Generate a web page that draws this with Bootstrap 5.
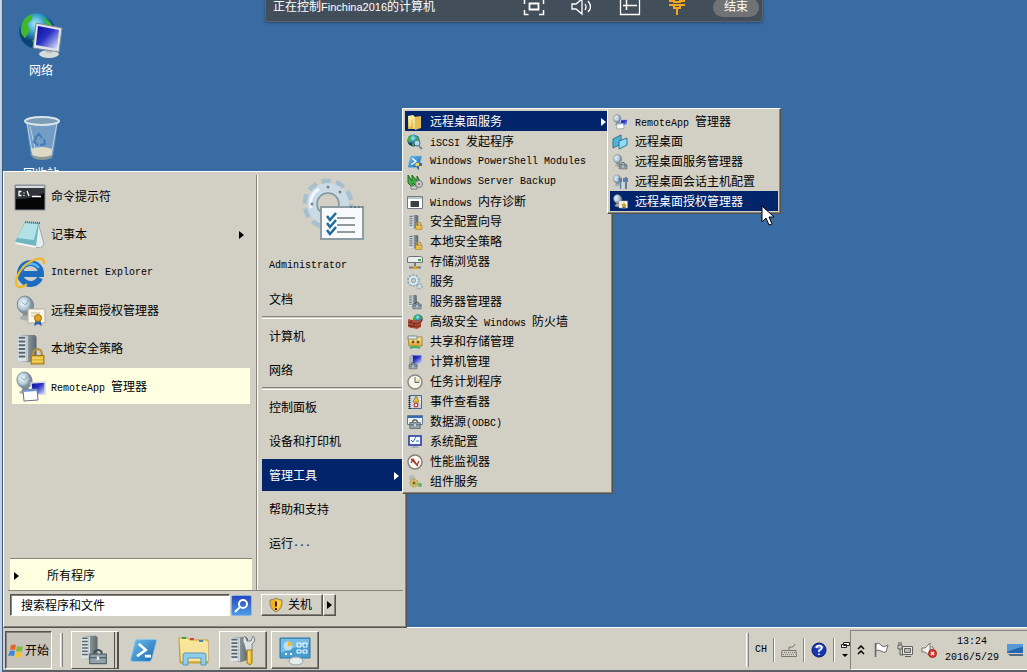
<!DOCTYPE html>
<html lang="zh-CN">

<head>
    <meta charset="utf-8">
    <meta name="viewport" content="width=device-width, initial-scale=1">
    <title>远程桌面</title>
    <link href="https://cdn.jsdelivr.net/npm/bootstrap@5.3.2/dist/css/bootstrap.min.css" rel="stylesheet">
    <style>
        :root {
            --face: #d2cfc5;
            --hi: #02246a;
            --tip: #ffffe1;
            --dark: #55534e;
            --mid: #85837c;
        }

        body {
            font: 12px/16px "Liberation Sans", "Noto Sans CJK SC", sans-serif;
            color: #000;
            background: #386ca2;
        }

        a { color: inherit; text-decoration: none; }
        svg { flex: none; display: block; }
        .en { font: 10px/10px "Liberation Mono", monospace; white-space: pre; }
        .i16 { width: 16px; height: 16px; }
        .i32 { width: 32px; height: 32px; }
        .i48 { width: 48px; height: 48px; }
        .face { background: var(--face); }

        .raised {
            background: var(--face);
            border: 1px solid;
            border-color: #fff var(--dark) var(--dark) #fff;
            box-shadow: inset -1px -1px 0 var(--mid);
        }

        .edge-strip { width: 3px; background: #c3d3e6; border-right: 1px solid #3f5a7c; }
        .desk-icons { width: 76px; padding-top: 11px; gap: 39px; }
        .desk-icons a { color: #fff; height: 64px; }

        /* 远程控制栏 */
        .control-bar {
            left: 262px;
            top: 0;
            width: 498px;
            height: 22px;
            padding: 0 3px 7px 7px;
            color: #fff;
            background: #434e5b;
            border: 1px solid #5b626b;
            border-top: 0;
            border-radius: 0 0 4px 4px;
            box-shadow: 0 1px 3px #24486e;
        }
        .control-bar .latin { font-size: 11px; }
        .control-bar .actions { gap: 26px; }
        .control-bar button { background: none; border: 0; padding: 0; color: #fff; }
        .control-bar .stop { width: 46px; height: 19px; border-radius: 10px; background: #707274; }

        /* 开始菜单 */
        .start-menu { left: 0; bottom: 44px; width: 404px; padding: 3px 3px 10px 4px; }
        .programs { width: 249px; padding-top: 3px; border-right: 1px solid var(--mid); }
        .programs ul { gap: 2px; }
        .programs ul a { height: 36px; margin: 0 6px 0 4px; padding: 1px 6px 0 2px; gap: 5px; }
        .programs ul a.current { background: var(--tip); }
        .all-programs { height: 32px; background: var(--tip); border-top: 1px solid var(--mid); margin: 0 4px 0 2px; padding: 2px 4px 0; gap: 28px; }
        .places { border-left: 1px solid #fff; padding: 2px 0 30px 4px; }
        .places a { height: 32px; margin: 1px 0; padding: 2px 4px 0 7px; }
        .places .gear { width: 64px; height: 64px; margin: 0 0 7px 40px; }
        .places .rule { height: 3px; border-top: 1px solid var(--mid); border-bottom: 1px solid #fff; background: var(--face); }
        .chosen { background: var(--hi); color: #fff; }
        .menu-foot { border-top: 1px solid var(--mid); padding: 3px 0 0 2px; }
        .menu-foot input {
            width: 220px;
            height: 22px;
            padding: 2px 10px 0;
            border: 1px solid;
            border-color: var(--dark) #fff #fff var(--dark);
            box-shadow: inset 1px 1px 0 var(--mid);
            border-radius: 0;
            outline: 0;
        }
        .menu-foot input::placeholder { color: #000; opacity: 1; }
        .search-go { width: 21px; height: 21px; border: 1px solid #8fb2e6; border-radius: 2px; padding: 2px; margin: 1px; background: linear-gradient(#2447bd, #4d9ce6); }
        .power { width: 62px; height: 22px; padding: 0 6px; gap: 4px; }
        .power-more { width: 13px; height: 22px; padding: 0 0 0 3px; }

        /* 级联菜单 */
        .cascade { padding: 2px; }
        .cascade a { height: 20px; padding: 1px 4px 0 2px; gap: 7px; white-space: nowrap; }
        .tools { left: 399px; bottom: 178px; width: 211px; }
        .remote { left: calc(100% - 3px); top: -3px; width: 174px; }
        .pointer { left: 758px; top: 205px; }

        /* 任务栏 */
        .taskbar { height: 45px; border-top: 1px solid #fff; border-bottom: 2px solid #5c5f63; padding: 2px 0 0 2px; }
        .start-btn {
            width: 47px; height: 38px; padding: 2px 2px 0; gap: 1px;
            background: #c6c3ba;
            border: 1px solid;
            border-color: var(--dark) #fff #fff var(--dark);
            box-shadow: inset 1px 1px 0 var(--mid);
        }
        .grip { width: 3px; height: 34px; border-left: 1px solid #fff; border-right: 1px solid var(--mid); margin: 0 8px; }
        .task { width: 48px; height: 38px; padding: 0; }
        .task.flat { background: none; border: 0; box-shadow: none; width: 50px; }
        .stacked { box-shadow: inset -1px 0 0 var(--dark), inset -3px 0 0 var(--face), inset -4px 0 0 var(--dark); padding-right: 3px; }
        .lang { gap: 6px; }
        .lang .bar { width: 2px; height: 24px; border-left: 1px solid var(--mid); border-right: 1px solid #fff; }
        .tray { height: 40px; gap: 8px; padding: 0 4px 0 6px; border: 1px solid; border-color: var(--mid) #fff #fff var(--mid); border-right: 0; }
        .tray .clock { font: 10px/16px "Liberation Mono", monospace; }
    </style>
    <script src="https://cdn.jsdelivr.net/npm/bootstrap@5.3.2/dist/js/bootstrap.bundle.min.js"></script>
</head>

<body>
    <!-- 图标 -->
    <svg width="0" height="0" class="position-absolute" aria-hidden="true">
        <defs>
            <linearGradient id="gBlue" x2="1" y2="1"><stop stop-color="#0a0a9a"/><stop offset=".45" stop-color="#2a31c4"/><stop offset="1" stop-color="#eef2ff"/></linearGradient>
            <linearGradient id="gSteel" x2="1"><stop stop-color="#c3ccd0"/><stop offset=".5" stop-color="#8e999c"/><stop offset="1" stop-color="#59666b"/></linearGradient>
            <linearGradient id="gSky" x2="1" y2="1"><stop stop-color="#6fc1ee"/><stop offset="1" stop-color="#1766ae"/></linearGradient>
            <linearGradient id="gGold" x2="0" y2="1"><stop stop-color="#fff0a0"/><stop offset="1" stop-color="#dfb038"/></linearGradient>
            <radialGradient id="gDish" cx=".4" cy=".35"><stop stop-color="#f5fbff"/><stop offset=".7" stop-color="#b4cbd8"/><stop offset="1" stop-color="#7f939e"/></radialGradient>
            <radialGradient id="gGlobe" cx=".45" cy=".3"><stop stop-color="#a8ecfa"/><stop offset=".55" stop-color="#2e9cc9"/><stop offset="1" stop-color="#0b4374"/></radialGradient>
            <symbol id="globe" viewBox="0 0 16 16"><circle cx="8" cy="8" r="7.500" fill="url(#gGlobe)"/><path d="M2 4q2-3 4-3l0 2-2 2 1 3-2 3Q0 9 2 4M10 2q4 2 5 5l-2 2-2-2 1-2zM6 12l3-1 1 2-3 2z" fill="#43b72c"/></symbol>
            <symbol id="lock" viewBox="0 0 16 16"><path d="M4 8V5a4 4 0 0 1 8 0v3" fill="none" stroke="#b5913a" stroke-width="2"/><path d="M2 7h12v8H2z" fill="#e3b62f" stroke="#9d741b"/><path d="M3 9.500h10M3 12.500h10" stroke="#f8df7d"/></symbol>
            <symbol id="server" viewBox="0 0 32 32"><path d="M4 2l6-1h12l2 2v24l-8 3-12-1z" fill="url(#gSteel)"/><path d="M4 2h9v27H4z" fill="#dbe3e6"/><path d="M5 4h7M5 8h7M5 12h7M5 16h7M5 20h7M5 24h7" stroke="#5a666b" stroke-width="2"/><path d="M14 2v27" stroke="#f4f6f6"/></symbol>
            <symbol id="dish" viewBox="0 0 32 32"><path d="M12 18l-2 8h12l-5-9z" fill="#8f9694"/><ellipse cx="16" cy="27" rx="9" ry="3" fill="#a9afac"/><ellipse cx="14" cy="11" rx="10" ry="11" fill="url(#gDish)" stroke="#71838c" transform="rotate(-20 14 11)"/><path d="M14 11l-5-4M14 11l4-6" stroke="#8496a0"/></symbol>
            <symbol id="toolbox" viewBox="0 0 16 16"><path d="M5 6V4q3-3 6 0v2" fill="none" stroke="#3d4a50" stroke-width="1.500"/><path d="M1 6h14v8H1z" fill="#92a3ab" stroke="#55646b"/><path d="M1 9h14" stroke="#4d5c64"/><path d="M7 8h2v3H7z" fill="#e6edf0"/></symbol>
            <symbol id="dlic" viewBox="0 0 32 32"><use href="#dish" width="26" height="28"/><path d="M14 14h17v14H14z" fill="#faf8ed" stroke="#b6ae94"/><path d="M17 18h9M17 21h5" stroke="#c5b98e"/><path d="M22 24l-2 7 4-2 4 2-2-7" fill="#2763bd"/><circle cx="24" cy="23" r="3.500" fill="#e2a41e" stroke="#a87509"/></symbol>
            <symbol id="dapp" viewBox="0 0 32 32"><use href="#dish" width="24" height="26"/><path d="M17 12l14-1v12l-13 1z" fill="url(#gBlue)" stroke="#d4d9e4" stroke-width="1.500"/><path d="M9 19l14-1 1 11-14 1z" fill="#fdfdfd" stroke="#6c7480"/><path d="M9 19l14-1v2l-14 1z" fill="#7098d6"/></symbol>
            <symbol id="cmd" viewBox="0 0 32 32"><path d="M1 4h30v25H1z" fill="#050505" stroke="#8b9098"/><path d="M1.500 4.500h29v2.500h-29z" fill="#d7dce2"/><path d="M2 7h28v5Q19 18 2 18z" fill="#30343a"/><path d="M7.500 10.500H5v4h2.500M10 11.500v1M10 14v1M13 10l2 5M18 15.500h9" fill="none" stroke="#fff" stroke-width="1.300"/></symbol>
            <symbol id="note" viewBox="0 0 32 32"><path d="M24 3l6 22-3 4-7-1z" fill="#e7edec" stroke="#9cabab"/><path d="M11 3l14 1-3 23-21-4z" fill="#6fb6c1"/><path d="M11 4l13 1-4 16-17-2z" fill="#b1e2e5"/><path d="M1 23l21 4v2L2 25z" fill="#f0f4f3"/><path d="M11 3l15 1" stroke="#5e6b6f" stroke-width="2" stroke-dasharray="1 1"/></symbol>
            <symbol id="ie" viewBox="0 0 32 32"><path d="M26 21a10.500 10.500 0 1 1 1-4H9" fill="none" stroke="#1e6cc0" stroke-width="6"/><path d="M25 11A10 10 0 0 0 8 12" fill="none" stroke="#55b8f1" stroke-width="2.500"/><path d="M30 7Q31 0 23 2 11 5 5 16q-6 12 0 14 3 1 8-3" fill="none" stroke="#efb824" stroke-width="2.200"/></symbol>
            <symbol id="srvlock" viewBox="0 0 32 32"><use href="#server" width="30" height="32"/><use href="#lock" x="15" y="15" width="17" height="17"/></symbol>
            <symbol id="srvbox" viewBox="0 0 32 32"><use href="#server" width="26" height="28"/><use href="#toolbox" x="8" y="13" width="24" height="19"/></symbol>
            <symbol id="ps" viewBox="0 0 32 32"><path d="M8 4h21q2 0 1 3l-5 19q-1 3-3 3H3q-3 0-2-3L6 6q0-2 2-2z" fill="url(#gSky)" stroke="#8ac7ec"/><path d="M10 9l8 7-10 7M17 23h7" fill="none" stroke="#fff" stroke-width="3"/></symbol>
            <symbol id="gear" viewBox="0 0 64 64">
                <circle cx="26" cy="27" r="22" fill="none" stroke="#a9bfce" stroke-width="7" stroke-dasharray="9 4.820"/>
                <circle cx="26" cy="27" r="16" fill="none" stroke="#cbdbe6" stroke-width="10"/>
                <circle cx="26" cy="27" r="11" fill="none" stroke="#8195a2" stroke-width="1.500"/>
                <path d="M9 31a17 17 0 0 1 8-19" fill="none" stroke="#f0f6fa" stroke-width="3"/>
                <circle cx="26" cy="10" r="1.500" fill="#718591"/><circle cx="10" cy="27" r="1.500" fill="#718591"/><circle cx="38" cy="15" r="1.500" fill="#718591"/>
            </symbol>
            <symbol id="shield" viewBox="0 0 16 16"><path d="M8 1q3 2 6 2 1 9-6 12Q1 12 2 3q3 0 6-2" fill="#f5ad22" stroke="#8c8873"/><path d="M8 2v12q5-3 5-10-3 0-5-2" fill="#ffcf46"/><path d="M8 4.500v5M8 11v2" stroke="#382209" stroke-width="2"/></symbol>
        </defs>
    </svg>

    <div class="d-flex vh-100 overflow-hidden">
        <div class="edge-strip flex-shrink-0"></div>
        <div class="d-flex flex-column flex-grow-1 position-relative">

            <main class="flex-grow-1 overflow-hidden">
                <div class="desk-icons d-flex flex-column text-center">
                    <a href="#" class="d-flex flex-column align-items-center">
                        <svg class="i48" viewBox="0 0 48 48">
                            <use href="#globe" x="1" y="0" width="38" height="40"/>
                            <ellipse cx="32" cy="43" rx="10" ry="4" fill="#d8dcd8"/>
                            <path d="M29 36h6v6h-6z" fill="#b9bfc4"/>
                            <path d="M19 12l26 5-3 24-26-4z" fill="#dfe3e8" stroke="#7e8793"/>
                            <path d="M21 15l21 4-2 19-21-4z" fill="url(#gBlue)"/>
                        </svg>
                        <span class="mt-1">网络</span>
                    </a>
                    <a href="#" class="d-flex flex-column align-items-center">
                        <svg class="i48" viewBox="0 0 48 48">
                            <path d="M9 7h32l-5 35q-11 5-22 0z" fill="#93b9d8" fill-opacity=".65"/>
                            <path d="M10 9l6 33M40 9l-6 33M13 12l6 27" stroke="#c9ddea" stroke-opacity=".8" fill="none"/>
                            <path d="M14 35q11-4 21 0l-1 7q-9 4-18 0z" fill="#ddd9c5"/>
                            <path d="M15 41q10 4 20 0v3q-10 4-19 0z" fill="#8d9898"/>
                            <ellipse cx="25" cy="7" rx="17" ry="4" fill="#7b9db7" stroke="#dae5e8" stroke-width="2"/>
                            <path d="M18 24l4-4 3 4M27 25l1 5-5 1M21 31l-4-3 2-4" fill="none" stroke="#3f7dbb" stroke-width="2"/>
                        </svg>
                        <span class="mt-1">回收站</span>
                    </a>
                </div>
            </main>

            <header class="control-bar position-absolute d-flex align-items-center">
                <span class="me-auto">正在控制<span class="latin">Finchina2016</span>的计算机</span>
                <div class="actions d-flex align-items-center">
                    <button type="button" aria-label="全屏"><svg width="22" height="18" viewBox="0 0 22 18" fill="none" stroke="#fff"><path d="M1.500 6V2M20.500 2v4M1.500 12v4.500h4M16 16.500h4.500V12" stroke-width="1.500"/><path d="M6.500 5.500h9v6h-9z" stroke-width="1.800"/></svg></button>
                    <button type="button" aria-label="声音"><svg width="22" height="20" viewBox="0 0 22 20" fill="none" stroke="#fff" stroke-width="1.300"><path d="M1 7h4l6-5v15l-6-5H1zM14 7q2 3 0 6M17 4q5 6 0 11"/></svg></button>
                    <button type="button" aria-label="白板"><svg width="22" height="20" viewBox="0 0 22 20" fill="none" stroke="#fff"><path d="M1.500 0v17.500h19V0M4 8.500h14" stroke-width="1.300"/><path d="M7.500 3v10" stroke-width="1.500"/></svg></button>
                    <button type="button" aria-label="固定"><svg width="20" height="20" viewBox="0 0 20 20" fill="none" stroke="#f5a51d" stroke-width="2"><path d="M5 1v3H2M15 1v3h3M2 8h16M7 3v2h6V3M7 9v2h6V9M10 11v7"/></svg></button>
                    <button type="button" class="stop">结束</button>
                </div>
            </header>

            <!-- 开始菜单 -->
            <nav class="start-menu raised position-absolute">
                <div class="d-flex">
                    <div class="programs d-flex flex-column justify-content-between">
                        <ul class="list-unstyled d-flex flex-column mb-0">
                            <li><a href="#" class="d-flex align-items-center"><svg class="i32"><use href="#cmd"/></svg>命令提示符</a></li>
                            <li><a href="#" class="d-flex align-items-center"><svg class="i32"><use href="#note"/></svg><span class="me-auto">记事本</span><svg width="5" height="8"><path d="M0 0l5 4-5 4z"/></svg></a></li>
                            <li><a href="#" class="d-flex align-items-center"><svg class="i32"><use href="#ie"/></svg><span class="en">Internet Explorer</span></a></li>
                            <li><a href="#" class="d-flex align-items-center"><svg class="i32"><use href="#dlic"/></svg>远程桌面授权管理器</a></li>
                            <li><a href="#" class="d-flex align-items-center"><svg class="i32"><use href="#srvlock"/></svg>本地安全策略</a></li>
                            <li><a href="#" class="current d-flex align-items-center"><svg class="i32"><use href="#dapp"/></svg><span><span class="en">RemoteApp </span>管理器</span></a></li>
                        </ul>
                        <a href="#" class="all-programs d-flex align-items-center"><svg width="5" height="8"><path d="M0 0l5 4-5 4z"/></svg>所有程序</a>
                    </div>
                    <div class="places d-flex flex-column flex-grow-1">
                        <svg class="gear" viewBox="0 0 64 64">
                            <use href="#gear"/>
                            <path d="M19 30h42v32H19z" fill="#f8fafb" stroke="#8d9ba3" stroke-width="2"/>
                            <path d="M48 30h13" stroke="#6b7b86" stroke-width="2" stroke-dasharray="2 2"/>
                            <path d="M35 41h18M35 48h18M35 55h18" stroke="#707b81" stroke-width="1.500"/>
                            <path d="M25 39l3 4 6-7M25 46l3 4 6-7M25 53l3 4 6-7" fill="none" stroke="#216c9f" stroke-width="2.500"/>
                        </svg>
                        <a href="#" class="d-flex align-items-center"><span class="en">Administrator</span></a>
                        <a href="#" class="d-flex align-items-center">文档</a>
                        <div class="rule"></div>
                        <a href="#" class="d-flex align-items-center">计算机</a>
                        <a href="#" class="d-flex align-items-center">网络</a>
                        <div class="rule"></div>
                        <a href="#" class="d-flex align-items-center">控制面板</a>
                        <a href="#" class="d-flex align-items-center">设备和打印机</a>
                        <a href="#" class="chosen d-flex align-items-center justify-content-between">管理工具<svg width="5" height="8" fill="#fff"><path d="M0 0l5 4-5 4z"/></svg></a>
                        <a href="#" class="d-flex align-items-center">帮助和支持</a>
                        <a href="#" class="d-flex align-items-center">运行<span class="en">...</span></a>
                    </div>
                </div>
                <form class="menu-foot d-flex">
                    <input type="text" placeholder="搜索程序和文件" aria-label="搜索程序和文件">
                    <button type="button" class="search-go" aria-label="搜索"><svg width="15" height="15" fill="none" stroke="#fff" stroke-width="2"><circle cx="9" cy="6" r="4"/><path d="M6 9l-5 5"/></svg></button>
                    <button type="button" class="power raised d-flex align-items-center ms-2"><svg class="i16"><use href="#shield"/></svg>关机</button>
                    <button type="button" class="power-more raised d-flex align-items-center" aria-label="更多"><svg width="5" height="8"><path d="M0 0l5 4-5 4z"/></svg></button>
                </form>
            </nav>

            <!-- 管理工具 -->
            <ul class="tools cascade raised list-unstyled mb-0 position-absolute">
                <li class="position-relative">
                    <a href="#" class="chosen d-flex align-items-center">
                        <svg class="i16" viewBox="0 0 16 16"><path d="M1 2l5-1 2 2v12H1z" fill="url(#gGold)"/><path d="M7 3l7-1v12l-6 2z" fill="#e5be58"/><path d="M7 3v12M3 3v10" stroke="#fff5c6"/></svg>
                        <span class="me-auto">远程桌面服务</span>
                        <svg width="5" height="8" fill="#fff"><path d="M0 0l5 4-5 4z"/></svg>
                    </a>
                    <ul class="remote cascade raised list-unstyled mb-0 position-absolute">
                        <li><a href="#" class="d-flex align-items-center"><svg class="i16"><use href="#dapp"/></svg><span><span class="en">RemoteApp </span>管理器</span></a></li>
                        <li><a href="#" class="d-flex align-items-center"><svg class="i16" viewBox="0 0 16 16"><path d="M1 5l8-4v9l-8 4z" fill="#4fb3dc" stroke="#35738f"/><path d="M7 7l8-3v7l-8 4z" fill="#8ddcf4" stroke="#35738f"/></svg>远程桌面</a></li>
                        <li><a href="#" class="d-flex align-items-center"><svg class="i16" viewBox="0 0 16 16"><use href="#dish" width="13" height="14"/><use href="#toolbox" x="6" y="7" width="10" height="9"/></svg>远程桌面服务管理器</a></li>
                        <li><a href="#" class="d-flex align-items-center"><svg class="i16" viewBox="0 0 16 16"><use href="#dish" width="12" height="14"/><path d="M7 4l1 3 1-1v9M14 3v12M12 4v3h4V4" fill="none" stroke="#5b7eb0" stroke-width="2"/><path d="M10 8v7" stroke="#eef3f6"/></svg>远程桌面会话主机配置</a></li>
                        <li><a href="#" class="chosen d-flex align-items-center"><svg class="i16"><use href="#dlic"/></svg>远程桌面授权管理器</a></li>
                    </ul>
                </li>
                <li><a href="#" class="d-flex align-items-center"><svg class="i16" viewBox="0 0 16 16"><use href="#globe" width="13" height="13"/><circle cx="10" cy="9" r="3" fill="#a8d9ed" stroke="#4c6a80"/><path d="M12 12l3 3" stroke="#789" stroke-width="2"/></svg><span><span class="en">iSCSI </span>发起程序</span></a></li>
                <li><a href="#" class="d-flex align-items-center"><svg class="i16" viewBox="0 0 16 16"><use href="#ps" width="16" height="15"/><path d="M9 9h6q0 5-3 7-3-2-3-7" fill="#f8d342"/><path d="M12 9h3v3h-3zM9.300 12H12v4q-2-1-2.700-4" fill="#3565c5"/></svg><span class="en">Windows PowerShell Modules</span></a></li>
                <li><a href="#" class="d-flex align-items-center"><svg class="i16" viewBox="0 0 16 16"><path d="M1 1l4 6V1l5 6V2l3 5-4 5-3-3v5L1 9z" fill="#3faa43" stroke="#206c2a"/><circle cx="12" cy="10" r="3.500" fill="#c7ced1" stroke="#747c80"/><circle cx="12" cy="10" r="1" fill="#b94f2a"/><path d="M4 12h6v3H4z" fill="#d4d9d9" stroke="#707874"/></svg><span class="en">Windows Server Backup</span></a></li>
                <li><a href="#" class="d-flex align-items-center"><svg class="i16" viewBox="0 0 16 16"><path d="M.5 2.500h15v12H.5z" fill="#fff" stroke="#737b84"/><path d="M1 3h14v2H1z" fill="#bac5d1"/><path d="M4 7h8v6H4z" fill="#363b3c"/><path d="M3 8h10M3 10h10M3 12h10" stroke="#4c5253" stroke-dasharray="1 1"/></svg><span><span class="en">Windows </span>内存诊断</span></a></li>
                <li><a href="#" class="d-flex align-items-center"><svg class="i16"><use href="#srvlock"/></svg>安全配置向导</a></li>
                <li><a href="#" class="d-flex align-items-center"><svg class="i16"><use href="#srvlock"/></svg>本地安全策略</a></li>
                <li><a href="#" class="d-flex align-items-center"><svg class="i16" viewBox="0 0 16 16"><path d="M.5 3.500l2-1h11l2 1v5H.5z" fill="#e9eded" stroke="#697276"/><path d="M11 5h3v2h-3z" fill="#35a947"/><path d="M8 9v3M2 13.500h12" stroke="#747d80" stroke-width="2"/><path d="M6 12h4v3H6z" fill="#dfa32a"/></svg>存储浏览器</a></li>
                <li><a href="#" class="d-flex align-items-center"><svg class="i16" viewBox="0 0 16 16"><circle cx="6.500" cy="6.500" r="5.500" fill="none" stroke="#8eadc2" stroke-width="2" stroke-dasharray="2 1.450"/><circle cx="6.500" cy="6.500" r="3.500" fill="#c3dbe9" stroke="#d9e9f2" stroke-width="2"/><circle cx="6.500" cy="6.500" r="2" fill="#d2cfc5" stroke="#7b98aa"/><circle cx="12.500" cy="12.500" r="2.500" fill="#d0dee6" stroke="#8ba5b5" stroke-width="1.500" stroke-dasharray="1.500 1"/></svg>服务</a></li>
                <li><a href="#" class="d-flex align-items-center"><svg class="i16"><use href="#srvbox"/></svg>服务器管理器</a></li>
                <li><a href="#" class="d-flex align-items-center"><svg class="i16" viewBox="0 0 16 16"><use href="#globe" x="6" width="10" height="10"/><path d="M1 5l9 2v8l-9-2zM10 7l4-2v8l-4 2z" fill="#b94f38"/><path d="M1 8l9 2 4-2M1 11l9 2 4-2M4 6v2M7 9v3M4 11v3" fill="none" stroke="#68291f"/></svg><span>高级安全<span class="en"> Windows </span>防火墙</span></a></li>
                <li><a href="#" class="d-flex align-items-center"><svg class="i16" viewBox="0 0 16 16"><path d="M1 3l5-1 2 1h7v9H2z" fill="url(#gGold)" stroke="#a78738"/><path d="M1 2h9v3H1z" fill="#e5ebeb" stroke="#829094"/><circle cx="6" cy="8" r="1.500" fill="#7b4928"/><circle cx="11" cy="8" r="1.500" fill="#7b4928"/><path d="M4 11q2-3 4 0 2-3 4 0" fill="none" stroke="#d8a23c"/><path d="M3 14q5-2 10 0" fill="none" stroke="#3cae70" stroke-width="2"/></svg>共享和存储管理</a></li>
                <li><a href="#" class="d-flex align-items-center"><svg class="i16" viewBox="0 0 16 16"><path d="M4 1h11v9H4z" fill="url(#gBlue)" stroke="#c4ccda"/><path d="M2 2h4v9H2z" fill="#a8b5bb"/><path d="M9 10v3" stroke="#758590" stroke-width="3"/><use href="#toolbox" y="7" width="12" height="9"/></svg>计算机管理</a></li>
                <li><a href="#" class="d-flex align-items-center"><svg class="i16" viewBox="0 0 16 16"><circle cx="8" cy="8" r="7" fill="#f9f6e3" stroke="#888b89" stroke-width="1.500"/><path d="M8 8l5-4v5z" fill="#e3d692"/><path d="M8 3v5.500h4" fill="none" stroke="#4f6987"/></svg>任务计划程序</a></li>
                <li><a href="#" class="d-flex align-items-center"><svg class="i16" viewBox="0 0 16 16"><path d="M2.500 1.500h12v13h-12z" fill="#c6d6ed" stroke="#4e658f"/><path d="M2.500 2v13" stroke="#222" stroke-width="2" stroke-dasharray="1 1"/><path d="M9 2l3 6H6z" fill="#f3c735" stroke="#a88315"/><circle cx="9" cy="11" r="2.500" fill="#d64235"/><path d="M8 10l2 2m0-2l-2 2M12 5h2m-2 3h2" stroke="#fff"/></svg>事件查看器</a></li>
                <li><a href="#" class="d-flex align-items-center"><svg class="i16" viewBox="0 0 16 16"><path d="M.5 1.500h15v9H.5z" fill="#e8eef2" stroke="#617b9d"/><path d="M1 2h14v2H1z" fill="#3769ad"/><use href="#toolbox" y="4" width="16" height="12"/></svg><span>数据源<span class="en">(ODBC)</span></span></a></li>
                <li><a href="#" class="d-flex align-items-center"><svg class="i16" viewBox="0 0 16 16"><path d="M2 2h12v9H2z" fill="#f5faff" stroke="#1d309c" stroke-width="1.500"/><path d="M4 6l2 2 3-5M9 7h3" fill="none" stroke="#4573b7"/><path d="M6 12h4l2 2H4z" fill="#a4afbd"/></svg>系统配置</a></li>
                <li><a href="#" class="d-flex align-items-center"><svg class="i16" viewBox="0 0 16 16"><circle cx="8" cy="8" r="7" fill="#fff6ed" stroke="#81837f" stroke-width="1.500"/><path d="M4 9l2-4 4 6 2-4M4 5l7 7" fill="none" stroke="#923e32" stroke-width="1.300"/></svg>性能监视器</a></li>
                <li><a href="#" class="d-flex align-items-center"><svg class="i16" viewBox="0 0 16 16"><circle cx="5" cy="4" r="3" fill="#b3bbb9"/><circle cx="7" cy="9" r="4" fill="#d5bd66" stroke="#aa9346" stroke-dasharray="2 1"/><circle cx="7" cy="9" r="1.500" fill="#736438"/><circle cx="13" cy="11" r="2" fill="#63af65"/></svg>组件服务</a></li>
            </ul>

            <svg class="pointer position-absolute" width="14" height="22" viewBox="0 0 14 22"><path d="M1 1v16l4-4 3 7 3-1-3-7h5z" fill="#fff" stroke="#000"/></svg>

            <!-- 任务栏 -->
            <footer class="taskbar face d-flex align-items-center">
                <button type="button" class="start-btn d-flex align-items-center">
                    <svg class="i16" viewBox="0 0 16 16"><path d="M3 2q3-1 5 0L7 7Q4 6 2 7z" fill="#e9642b"/><path d="M9 3q3 1 6 0l-1 5q-3 1-6 0z" fill="#7fbd3b"/><path d="M2 8q3-1 5 0l-1 5q-3-1-6 0z" fill="#3489d2"/><path d="M8 9q3 1 6 0l-1 5q-3 1-6 0z" fill="#f6c42d"/></svg>开始
                </button>
                <div class="grip"></div>
                <div class="d-flex align-items-center">
                    <button type="button" class="task raised stacked d-flex align-items-center justify-content-center" aria-label="服务器管理器"><svg class="i32"><use href="#srvbox"/></svg></button>
                    <button type="button" class="task flat d-flex align-items-center justify-content-center" aria-label="PowerShell"><svg width="28" height="28"><use href="#ps"/></svg></button>
                    <button type="button" class="task flat d-flex align-items-center justify-content-center" aria-label="资源管理器"><svg class="i32" viewBox="0 0 32 32"><path d="M1 4h9l2 2h18v23H2z" fill="url(#gGold)" stroke="#c29b3c"/><path d="M3 8h27v19H3z" fill="#f8e49a"/><path d="M4 4h4" stroke="#399c42" stroke-width="2"/><path d="M12 5h4" stroke="#cf4937" stroke-width="2"/><path d="M21 7h4" stroke="#3f86c4" stroke-width="2"/><path d="M5 31V21q0-2 2-2h19q2 0 2 2v10h-5v-7H10v7z" fill="#8fcdea" stroke="#5497be"/></svg></button>
                    <div class="d-flex gap-1">
                        <button type="button" class="task raised d-flex align-items-center justify-content-center" aria-label="本地安全策略"><svg class="i32" viewBox="0 0 32 32"><use href="#server" width="28" height="32"/><path d="M17 10q-3-5 1-8l2 5h4l2-5q4 4-1 8v7h-6z" fill="#dce2e4" stroke="#7b8589"/><path d="M20 16h5v13l-2 2-3-2z" fill="#edbc2d" stroke="#a67b16"/><path d="M22 17v11" stroke="#fff099"/></svg></button>
                        <button type="button" class="task raised d-flex align-items-center justify-content-center" aria-label="控制面板"><svg class="i32" viewBox="0 0 32 32"><path d="M1 4h30v20H1z" fill="#479dd0" stroke="#2f77a8"/><path d="M2 5h28v5Q18 12 2 19z" fill="#75bee5"/><circle cx="9" cy="12" r="4.500" fill="#bde0f1"/><path d="M9 12V7.500A4.500 4.500 0 0 1 13.500 12z" fill="#f2b83a"/><path d="M18 9h4v4h-4zM24 9h4v4h-4zM18 16h4v3h-4zM24 16h4v3h-4z" fill="none" stroke="#fff"/><path d="M6 20h2m3 0h2" stroke="#fff" stroke-width="2"/><ellipse cx="17" cy="27" rx="7" ry="4" fill="#e6ebec" stroke="#97a4a9"/></svg></button>
                    </div>
                </div>

                <div class="lang d-flex align-items-center ms-auto">
                    <div class="grip m-0"></div>
                    <span class="en">CH</span>
                    <div class="bar"></div>
                    <svg class="i16" viewBox="0 0 16 16" fill="none" stroke="#77766f"><path d="M1 8.500h14l.5 6H.5zM8 8V5q5 1 6-3"/><path d="M3 10.500h11M2 12.500h12" stroke-dasharray="1 1"/></svg>
                    <div class="bar"></div>
                    <svg class="i16" viewBox="0 0 16 16"><circle cx="8" cy="8" r="7" fill="#1738b3" stroke="#07135c"/><path d="M3 5q5-5 10 0-5 3-10 0" fill="#7693e1"/><path d="M5.500 6q0-2.500 2.700-2.500t2.600 2.300Q10.800 7.500 8 8.500V10M8 11.500V13" fill="none" stroke="#fff" stroke-width="1.700"/></svg>
                    <div class="bar"></div>
                    <svg width="9" height="18" viewBox="0 0 9 18"><path d="M2.500 1.500h6v3h-6zM.5 3.500h5v3h-5z" fill="#eee" stroke="#222"/><path d="M1 13h6l-3 3z"/></svg>
                </div>
                <div class="tray d-flex align-items-center">
                    <svg width="8" height="10" fill="none" stroke="#000" stroke-width="1.500"><path d="M1 4l3-3 3 3M1 9l3-3 3 3"/></svg>
                    <svg class="i16" viewBox="0 0 16 16"><path d="M2.500 1v14" stroke="#666" stroke-width="1.500"/><path d="M3 2q3-2 5 1t7 0l-2 7q-2 1-5-1t-5 0z" fill="#fff" stroke="#696969"/></svg>
                    <svg class="i16" viewBox="0 0 16 16" fill="#ece9df" stroke="#5f615f"><path d="M5.500 4.500h10v8h-10z"/><path d="M7.500 6.500h6v4h-6z" fill="#bbbbb4"/><path d="M8 14.500h6M1 3h4v4H1zM2 0v3m2-3v3M3 7v6h3" fill="none"/></svg>
                    <svg class="i16" viewBox="0 0 16 16"><path d="M1 6h3l5-5v13l-5-4H1z" fill="#f5f4ed" stroke="#74746f"/><path d="M11 4q2 2 1 5" fill="none" stroke="#74746f"/><circle cx="11.500" cy="11.500" r="4" fill="#d83b2e" stroke="#a02820"/><path d="M10 10l3 3m0-3l-3 3" stroke="#fff" stroke-width="1.300"/></svg>
                    <time class="clock text-center">13:24<br>2016/5/29</time>
                    <svg width="16" height="14" viewBox="0 0 16 14"><path d="M0 1h16v9H0z" fill="#2865b1"/><path d="M0 1h16v3Q8 5 0 9z" fill="#5599d7"/><path d="M1 11h15v2H3z" fill="#526b85"/></svg>
                </div>
            </footer>
        </div>
    </div>
</body>

</html>
